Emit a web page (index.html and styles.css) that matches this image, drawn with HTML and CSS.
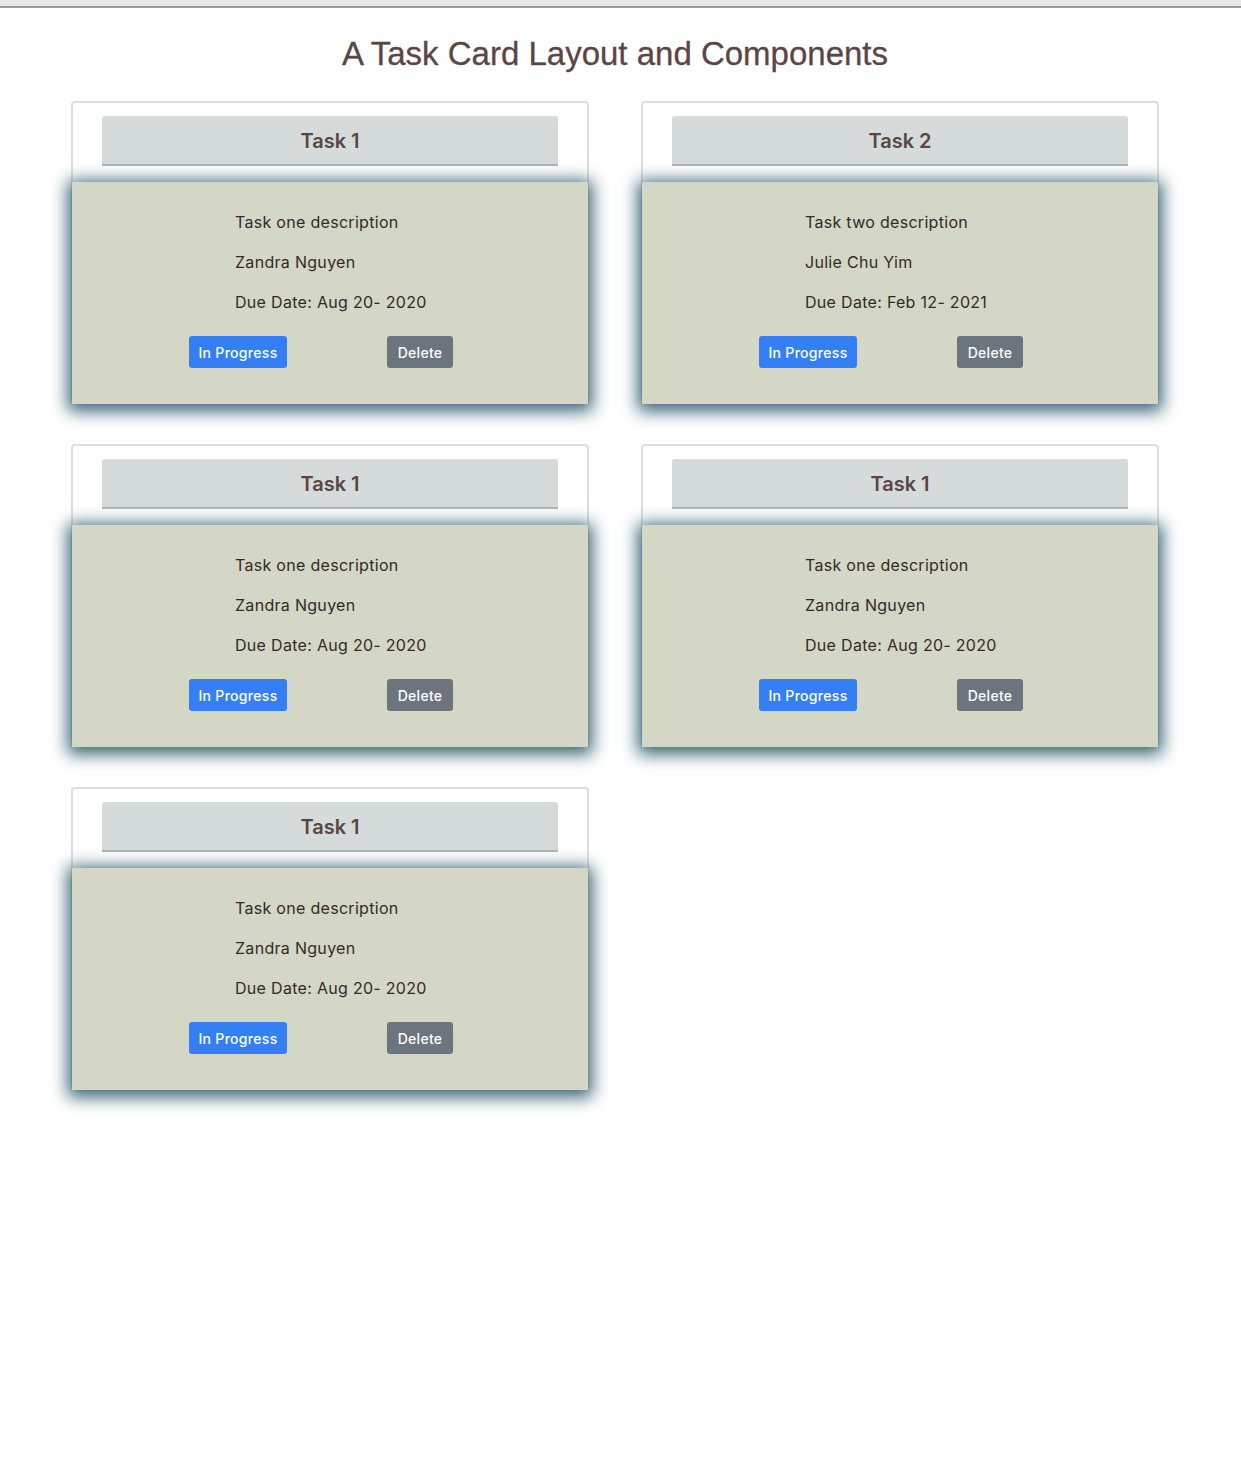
FILE: index.html
```html
<!DOCTYPE html>
<html>
<head>
<meta charset="utf-8">
<title>Task Cards</title>
<link rel="stylesheet" href="styles.css">
</head>
<body>
<div class="chrome"></div>
<main class="page">
  <h1 class="title">A Task Card Layout and Components</h1>
  <div class="grid">
    <section class="card">
      <header class="card-head">Task 1</header>
      <div class="card-body">
        <p class="line">Task one description</p>
        <p class="line">Zandra Nguyen</p>
        <p class="line">Due Date: Aug 20- 2020</p>
        <div class="actions">
          <button class="btn btn-primary">In Progress</button>
          <button class="btn btn-secondary">Delete</button>
        </div>
      </div>
    </section>
    <section class="card">
      <header class="card-head">Task 2</header>
      <div class="card-body">
        <p class="line">Task two description</p>
        <p class="line">Julie Chu Yim</p>
        <p class="line">Due Date: Feb 12- 2021</p>
        <div class="actions">
          <button class="btn btn-primary">In Progress</button>
          <button class="btn btn-secondary">Delete</button>
        </div>
      </div>
    </section>
    <section class="card">
      <header class="card-head">Task 1</header>
      <div class="card-body">
        <p class="line">Task one description</p>
        <p class="line">Zandra Nguyen</p>
        <p class="line">Due Date: Aug 20- 2020</p>
        <div class="actions">
          <button class="btn btn-primary">In Progress</button>
          <button class="btn btn-secondary">Delete</button>
        </div>
      </div>
    </section>
    <section class="card">
      <header class="card-head">Task 1</header>
      <div class="card-body">
        <p class="line">Task one description</p>
        <p class="line">Zandra Nguyen</p>
        <p class="line">Due Date: Aug 20- 2020</p>
        <div class="actions">
          <button class="btn btn-primary">In Progress</button>
          <button class="btn btn-secondary">Delete</button>
        </div>
      </div>
    </section>
    <section class="card">
      <header class="card-head">Task 1</header>
      <div class="card-body">
        <p class="line">Task one description</p>
        <p class="line">Zandra Nguyen</p>
        <p class="line">Due Date: Aug 20- 2020</p>
        <div class="actions">
          <button class="btn btn-primary">In Progress</button>
          <button class="btn btn-secondary">Delete</button>
        </div>
      </div>
    </section>
  </div>
</main>
</body>
</html>
```

FILE: styles.css
```css
* { box-sizing: border-box; }
html, body { margin: 0; padding: 0; background: #fff; }
body { font-family: Inter, "Noto Sans", sans-serif; color: #3a302e; }

.chrome {
  height: 8px;
  background: #e8e8e8;
  border-bottom: 2px solid #9c9c9c;
}

.page {
  padding: 0 82px 60px 71px;
}

.title {
  margin: 0;
  padding-top: 28px;
  height: 93px;
  text-align: center;
  font-family: "Liberation Sans", Arial, sans-serif;
  font-weight: 400;
  font-size: 33px;
  line-height: 36px;
  color: #5a4645;
  -webkit-text-stroke: 0.3px #5a4645;
}

.grid {
  display: grid;
  grid-template-columns: 518px 518px;
  column-gap: 52px;
  row-gap: 40px;
}

.card {
  border: 2px solid #dedede;
  border-bottom: none;
  border-radius: 4px 4px 0 0;
  padding-top: 13px;
  background: #fff;
}

.card-head {
  margin: 0 29px;
  height: 50px;
  background: #d5dbdb;
  border-bottom: 2px solid #b0b6b7;
  border-radius: 3px 3px 0 0;
  text-align: center;
  font-size: 20px;
  font-weight: 600;
  line-height: 50px;
  color: #5a4645;
}

.card-body {
  margin: 16px -1px 0 -1px;
  height: 222px;
  background: #d5d7c6;
  box-shadow: 0 3px 16px 4px rgba(52, 98, 116, 1);
  padding: 28px 0 0 163px;
  position: relative;
}

.line {
  margin: 0;
  height: 40px;
  font-size: 16px;
  line-height: 24px;
  letter-spacing: 0.3px;
  color: #332a28;
}

.actions {
  display: flex;
  gap: 100px;
  margin: 6px 0 0 -46px;
}

.btn {
  border: none;
  height: 32px;
  border-radius: 3px;
  font-family: Inter, "Noto Sans", sans-serif;
  font-size: 14px;
  font-weight: 500;
  color: #fff;
  padding: 0;
  letter-spacing: 0.3px;
}

.btn-primary { background: #347ff4; width: 98px; }
.btn-secondary { background: #6c747d; width: 66px; }
```
